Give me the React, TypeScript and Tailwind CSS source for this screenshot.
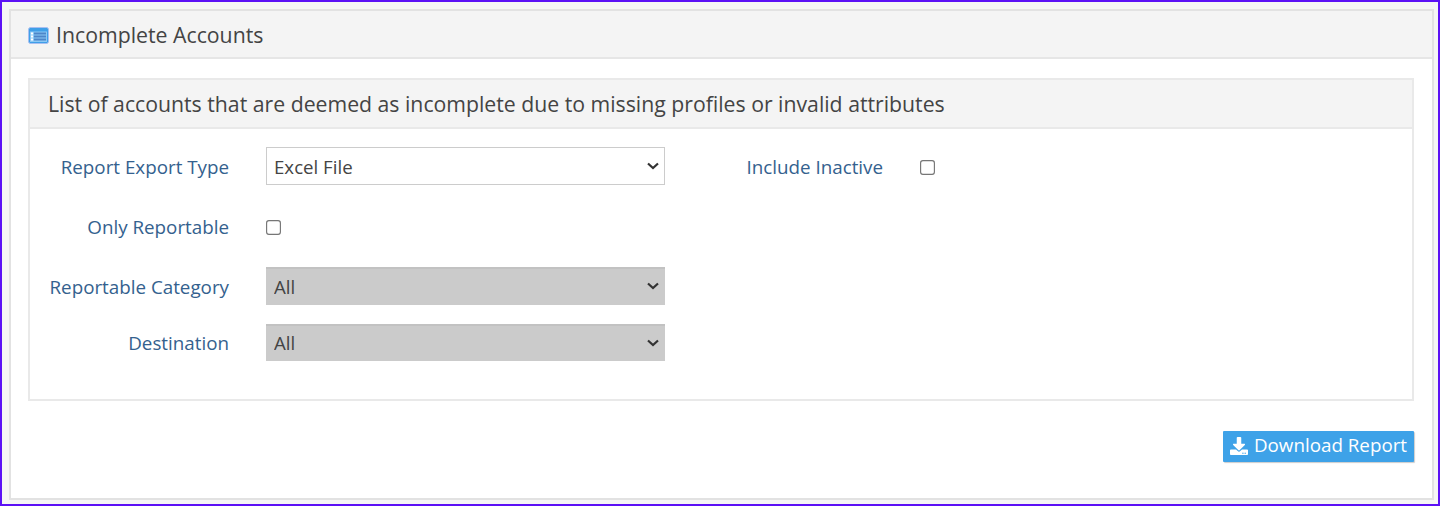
import { FaDownload } from "react-icons/fa";

const labelCls = "text-[18.8px] text-[#34618e]";
const checkCls = "ml-[38px] w-[13px] h-[13px] mt-[2px] scale-[1.15]";

function ListIcon() {
  return (
    <svg width="21" height="17" viewBox="0 0 21 17" className="shrink-0">
      <rect x="0.5" y="0.5" width="20" height="16" rx="2" fill="#3f9fe8" stroke="#a9bff0" />
      <rect x="2" y="4.5" width="17" height="10.5" fill="#8cc8f4" />
      <rect x="3" y="5.5" width="2" height="2" fill="#fff" />
      <rect x="6" y="5.5" width="12" height="2" fill="#4d86c9" />
      <rect x="3" y="8.5" width="2" height="2" fill="#fff" />
      <rect x="6" y="8.5" width="12" height="2" fill="#4d86c9" />
      <rect x="3" y="11.5" width="2" height="2" fill="#fff" />
      <rect x="6" y="11.5" width="12" height="2" fill="#4d86c9" />
    </svg>
  );
}

function Label({ children, pad = "pt-[2px]" }: { children: string; pad?: string }) {
  return <label className={`w-[199px] text-right ${pad} ${labelCls}`}>{children}</label>;
}

function Select({ value, cls, h }: { value: string; cls: string; h: string }) {
  return (
    <div className={`relative w-[399px] ml-[37px] ${h}`}>
      <select
        disabled={value === "All"}
        className={`appearance-none w-full h-full text-[18.67px] text-[#444] opacity-100 ${cls}`}
      >
        <option>{value}</option>
      </select>
      <svg
        width="12"
        height="8"
        viewBox="0 0 12 8"
        className="absolute right-[6px] top-1/2 -translate-y-1/2 pointer-events-none"
      >
        <path d="M1 1.5 L6 6 L11 1.5" fill="none" stroke="#333" strokeWidth="2.2" />
      </svg>
    </div>
  );
}

export default function App() {
  return (
    <div className="h-[506px] border-2 border-[#5b10f5] bg-[#f5f5f5] pl-[7px] pt-[7px] pr-[4px] font-['Open_Sans',sans-serif] overflow-hidden">
      <div className="h-[491px] border-2 border-[#e2e2e2] bg-white">
        <div className="h-[48px] flex items-center gap-[7px] pl-[17px] pt-[2px] bg-[#f4f4f4] border-b-2 border-[#e6e6e6]">
          <ListIcon />
          <span className="text-[21.28px] text-[#444]">Incomplete Accounts</span>
        </div>
        <div className="pl-[17px] pr-[18px] pt-[19px]">
          <div className="h-[323px] border-2 border-[#e9e9e9]">
            <div className="h-[49px] flex items-center pl-[18px] bg-[#f4f4f4] border-b-2 border-[#e9e9e9]">
              <span className="text-[21.24px] text-[#444]">
                List of accounts that are deemed as incomplete due to missing profiles or invalid attributes
              </span>
            </div>
            <div className="pt-[18px]">
              <div className="flex items-center h-[38px]">
                <Label>Report Export Type</Label>
                <Select value="Excel File" h="h-[38px]" cls="pl-[7px] pt-[2px] bg-white border border-[#ccc]" />
                <label className={`w-[218px] text-right pt-[2px] ${labelCls}`}>Include Inactive</label>
                <input type="checkbox" className={checkCls} />
              </div>
              <div className="flex items-center h-[38px] mt-[22px]">
                <Label>Only Reportable</Label>
                <input type="checkbox" className={checkCls} />
              </div>
              <div className="flex items-center h-[38px] mt-[22px]">
                <Label>Reportable Category</Label>
                <Select value="All" h="h-[38px]" cls="pl-[8px] bg-[#cbcbcb] border-t-2 border-[#c2c2c2]" />
              </div>
              <div className="flex items-center h-[37px] mt-[19px]">
                <Label pad="pt-[1px]">Destination</Label>
                <Select value="All" h="h-[37px]" cls="pl-[8px] pb-[2px] bg-[#cbcbcb] border-t-2 border-[#c2c2c2]" />
              </div>
            </div>
          </div>
          <div className="flex justify-end mt-[30px]">
            <button className="h-[31px] w-[191px] flex items-center justify-center gap-[6px] pb-[2px] bg-[#3ea2e8] text-white text-[18.8px] rounded-[1px] shadow-[1px_1px_1px_#ccc]">
              <FaDownload size={18} />
              Download Report
            </button>
          </div>
        </div>
      </div>
    </div>
  );
}
